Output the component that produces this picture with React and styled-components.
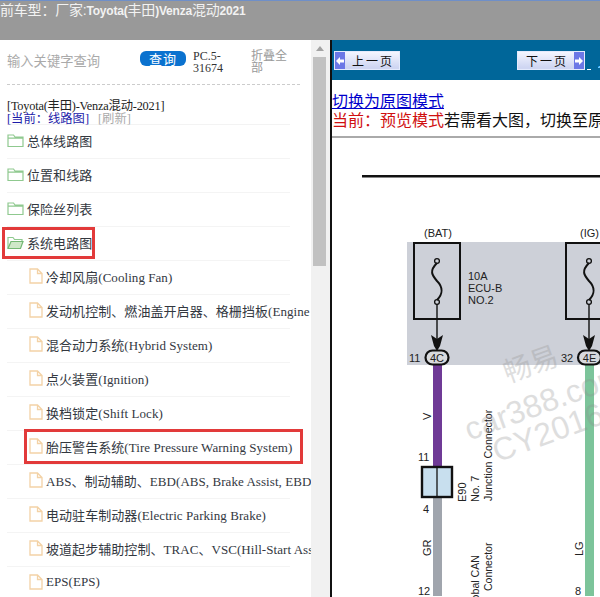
import React from 'react';
import styled, { createGlobalStyle } from 'styled-components';

const Global = createGlobalStyle`
  html, body { margin: 0; padding: 0; background: #fff; }
  body { width: 600px; height: 597px; overflow: hidden; font-family: "Liberation Serif", "Noto Sans CJK SC", serif; }
`;
const Page = styled.div`
  width: 600px; height: 597px; display: flex; flex-direction: column; overflow: hidden;
`;
const Header = styled.header`
  height: 39px; flex: none; background: #999; border-top: 1px solid #6f8fc8; letter-spacing: -.2px;
  color: #f2f2f2; font: bold 12px/18px "Liberation Sans", "Noto Sans CJK SC", sans-serif; white-space: nowrap; overflow: hidden;
`;
const Cjk = styled.span`font-size: 14px; font-weight: 400;`;
const Main = styled.main`flex: 1; min-height: 0; display: flex;`;
const Side = styled.aside`
  width: 311px; flex: none; overflow: hidden; box-sizing: border-box;
`;
const Search = styled.div`
  height: 44px; margin: 0 11px 0 7px; display: flex; align-items: center; border-bottom: 1px dashed #ccc; box-sizing: content-box;
`;
const Hint = styled.div`
  width: 133px; flex: none; font: 13.3px "Noto Sans CJK SC", sans-serif; color: #aaa; margin-top: -3px;
`;
const Query = styled.button`
  width: 46px; height: 15px; flex: none; border: 0; padding: 0; border-radius: 6px; background: #0b72cf; color: #fff;
  font: 13px/15px "Noto Sans CJK SC", sans-serif; letter-spacing: 1px; margin-top: -8px;
`;
const Version = styled.div`
  width: 58px; flex: none; margin-left: 7px; font-size: 12px; line-height: 12px; color: #333;
`;
const Fold = styled.div`
  width: 36px; flex: none; font: 12px/12px "Noto Sans CJK SC", sans-serif; color: #999; margin-top: -3px;
`;
const Crumbs = styled.div`
  margin: 15px 0 0 7px; font-size: 12.3px; line-height: 13px; width: 283px; height: 24px; border-bottom: 1px solid #f3f3f3; color: #222; white-space: nowrap;
`;
const CrumbTitle = styled.div`letter-spacing: -.2px;`;
const Current = styled.span`color: #1c1caa;`;
const Refresh = styled.span`color: #aaa; margin-left: 9px;`;
const Tree = styled.ul`list-style: none; margin: 0; padding: 0;`;
const Row = styled.li`
  position: relative; height: 34px; box-sizing: border-box; display: flex; align-items: center; gap: 3px;
  padding: 0 0 4px ${p => (p.$child ? 29 : 7)}px; width: 311px; white-space: nowrap;
  font-size: 13px; color: #333;
  &::before { content: ""; position: absolute; left: 7px; width: 283px; bottom: 0; border-bottom: 1px solid #f4f4f4; }
  & > svg { flex: none; }
`;
const Label = styled.span`flex: none; letter-spacing: .06px; color: #33383f;`;
const Mark = styled.div`
  position: absolute; box-sizing: border-box; border: 3px solid #e23a3a; pointer-events: none;
  left: ${p => p.$x}px; top: ${p => p.$y}px; width: ${p => p.$w}px; height: ${p => p.$h}px;
`;
const Bar = styled.div`
  width: 19px; flex: none; background: #f1f1f1; padding: 0 4px 0 2px; box-sizing: border-box; display: flex; flex-direction: column; align-items: stretch;
`;
const Arrow = styled.div`
  height: 17px; flex: none; display: flex; justify-content: center; align-items: center;
  &::before { content: ""; border: 4px solid transparent; border-top: 0; border-bottom: 5px solid #a3a3a3; }
`;
const Thumb = styled.div`height: 209px; background: #c1c1c1;`;
const Divider = styled.div`width: 2px; flex: none; background: #111;`;
const Content = styled.section`flex: 1; min-width: 0; display: flex; flex-direction: column; overflow: hidden;`;
const Toolbar = styled.div`
  height: 40px; flex: none; background: #006699; display: flex; align-items: center; padding: 0 0 0 2px; box-sizing: border-box; white-space: nowrap; overflow: hidden;
`;
const PageBtn = styled.div`
  height: 19px; width: ${p => p.$w}px; box-sizing: border-box; display: flex; align-items: center; flex-direction: ${p => (p.$next ? 'row-reverse' : 'row')};
  margin-left: ${p => p.$ml || 0}px; border: 1px solid #e4eafc; background: linear-gradient(#f4f6ff, #cfd6f2 90%);
  font: 12px "Noto Sans CJK SC", sans-serif; color: #111; margin-top: 1px; flex: none;
`;
const BtnArrow = styled.span`
  width: 10px; align-self: stretch; background: #6c78e6; display: flex; align-items: center; justify-content: center;
  color: #fff;
`;
const BtnText = styled.span`flex: 1; text-align: center; letter-spacing: 2px; padding-left: 2px;`;
const ToolGap = styled.span`
  width: 4px; height: 1px; flex: none; margin: 18px 0 0 2px; background: #fff;
`;
const ToolLink = styled.span`color: #6fc8ff; font-size: 13px; text-decoration: underline; margin-left: 7px;`;
const Notice = styled.div`
  height: 58px; flex: none; box-sizing: border-box; border-bottom: 2px solid #aaa; padding: 11px 0 0 0;
  font: 16px/19px "Noto Sans CJK SC", sans-serif; white-space: nowrap; color: #111;
`;
const SwitchLink = styled.a`color: #0000cc; text-decoration: underline; display: block; width: max-content;`;
const Red = styled.span`color: #d01010;`;
const Diagram = styled.svg`display: block; flex: 1; min-height: 0; width: 268px;`;

const Folder = ({ open }) => (
  <svg width="17" height="15" viewBox="0 0 17 15" fill="none" stroke="#8fc98f" strokeWidth="1.2">
    {open ? (
      <>
        <path d="M1 13V2.5h5l1.5 2H15V6" />
        <path d="M1 13.5h12.5L16 6.5H4z" fill="#cfe8c9" stroke="#74b874" />
      </>
    ) : (
      <path d="M1 13.5V2h5.5L8 4h8v9.5z M1 5.2h15" fill="#fff" />
    )}
  </svg>
);
const FileIcon = () => (
  <svg width="14" height="16" viewBox="0 0 14 16" fill="none" stroke="#f3d2a6" strokeWidth="1.3">
    <path d="M1 1h7.5L13 5.5V15H1z M8.5 1v4.5H13" fill="#fff" />
  </svg>
);

const folders = ['总体线路图', '位置和线路', '保险丝列表'];
const files = [
  '冷却风扇(Cooling Fan)',
  '发动机控制、燃油盖开启器、格栅挡板(Engine Control)',
  '混合动力系统(Hybrid System)',
  '点火装置(Ignition)',
  '换档锁定(Shift Lock)',
  '胎压警告系统(Tire Pressure Warning System)',
  'ABS、制动辅助、EBD(ABS, Brake Assist, EBD)',
  '电动驻车制动器(Electric Parking Brake)',
  '坡道起步辅助控制、TRAC、VSC(Hill-Start Assist)',
  'EPS(EPS)',
];

const Fuse = ({ x }) => (
  <g>
    <rect x={x - 23} y="244" width="46" height="76" fill="none" stroke="#111" strokeWidth="2" />
    <circle cx={x} cy="262" r="2.4" fill="none" stroke="#111" strokeWidth="1.3" />
    <circle cx={x} cy="303" r="2.4" fill="none" stroke="#111" strokeWidth="1.3" />
    <path d={`M${x} 264 C${x - 8} 272 ${x - 5} 276 ${x} 282 C${x + 6} 288 ${x + 6} 295 ${x} 301`} fill="none" stroke="#111" strokeWidth="2" />
    <path d={`M${x} 305V345`} stroke="#111" strokeWidth="1.4" />
    <path d={`M${x - 6} 336 L${x} 340 L${x + 6} 336 L${x + 3} 347 L${x} 352 L${x - 3} 347 Z`} fill="#111" />
  </g>
);
const Pill = ({ x, label }) => (
  <g>
    <rect x={x - 11.5} y="351.5" width="23" height="14" rx="7" fill="#d8dade" stroke="#111" strokeWidth="2.2" />
    <text x={x} y="363" textAnchor="middle" fontSize="11">{label}</text>
  </g>
);
const Vert = ({ x, y, children, size = 11 }) => (
  <text transform={`translate(${x} ${y}) rotate(-90)`} fontSize={size}>{children}</text>
);

export default function App() {
  return (
    <Page>
      <Global />
      <Header><Cjk>前车型：厂家:</Cjk>Toyota(<Cjk>丰田</Cjk>)Venza<Cjk>混动</Cjk>2021</Header>
      <Main>
        <Side>
          <Search>
            <Hint>输入关键字查询</Hint>
            <Query>查询</Query>
            <Version>PC.5-<br />31674</Version>
            <Fold>折叠全部</Fold>
          </Search>
          <Crumbs>
            <CrumbTitle>[Toyota(丰田)-Venza混动-2021]</CrumbTitle>
            <Current>[当前：线路图]</Current><Refresh>[刷新]</Refresh>
          </Crumbs>
          <Tree>
            {folders.map(f => (
              <Row key={f}><Folder /><Label>{f}</Label></Row>
            ))}
            <Row><Folder open /><Label>系统电路图</Label><Mark $x={2} $y={0} $w={93} $h={32} /></Row>
            {files.map((f, i) => (
              <Row key={f} $child>
                <FileIcon /><Label>{f}</Label>
                {i === 5 && <Mark $x={24} $y={-2} $w={279} $h={35} />}
              </Row>
            ))}
          </Tree>
        </Side>
        <Bar><Arrow /><Thumb /></Bar>
        <Divider />
        <Content>
          <Toolbar>
            <PageBtn $w={66}>
              <BtnArrow><svg width="8" height="8" viewBox="0 0 8 8"><path d="M0 4l4-4v2.5h4v3H4V8z" fill="#fff" /></svg></BtnArrow>
              <BtnText>上一页</BtnText>
            </PageBtn>
            <PageBtn $w={68} $ml={117} $next>
              <BtnArrow><svg width="8" height="8" viewBox="0 0 8 8"><path d="M8 4L4 0v2.5H0v3h4V8z" fill="#fff" /></svg></BtnArrow>
              <BtnText>下一页</BtnText>
            </PageBtn>
            <ToolGap />
            <ToolLink>上</ToolLink>
          </Toolbar>
          <Notice>
            <SwitchLink>切换为原图模式</SwitchLink>
            <Red>当前：预览模式</Red>若需看大图，切换至原图模式
          </Notice>
          <Diagram viewBox="332 140 268 457" fontFamily="'Liberation Sans', sans-serif" fill="#222">
            <rect x="362" y="176" width="238" height="2.5" fill="#111" />
            <rect x="407" y="243" width="193" height="123" fill="#cdd0d8" />
            <rect x="433" y="366" width="9" height="102" fill="#6f3a96" />
            <rect x="585" y="366" width="9" height="231" fill="#7cc49a" />
            <rect x="433" y="498" width="9" height="99" fill="#a0a5ad" />
            <Fuse x={437} />
            <Fuse x={589} />
            <Pill x={437} label="4C" />
            <Pill x={589.5} label="4E" />
            <g fontSize="11">
              <text x="424" y="238">(BAT)</text>
              <text x="580" y="238">(IG)</text>
              <text x="468" y="281">10A</text>
              <text x="468" y="293">ECU-B</text>
              <text x="468" y="305">NO.2</text>
              <text x="409" y="363">11</text>
              <text x="561" y="363">32</text>
              <text x="418" y="462">11</text>
              <text x="423" y="514">4</text>
              <text x="418" y="596">12</text>
              <text x="575" y="596">8</text>
            </g>
            <rect x="422" y="468" width="30" height="30" fill="#c8dfee" stroke="#111" strokeWidth="2.4" />
            <path d="M437 468V498" stroke="#111" strokeWidth="1.3" />
            <Vert x={431} y={421}>V</Vert>
            <Vert x={431} y={557}>GR</Vert>
            <Vert x={583} y={557}>LG</Vert>
            <Vert x={466} y={503}>E90</Vert>
            <Vert x={479} y={503}>No. 7</Vert>
            <Vert x={492} y={502} size={10.6}>Junction Connector</Vert>
            <Vert x={479} y={612} size={10.6}>Global CAN</Vert>
            <Vert x={492} y={592} size={10.5}>Connector</Vert>
            <g fill="#8d8d8d" opacity=".28" transform="rotate(-20 530 410)">
              <text x="518" y="378" fontSize="28" fontFamily="'Noto Sans CJK SC', sans-serif">畅易</text>
              <text x="462" y="419" fontSize="32">car388.com</text>
              <text x="481" y="449" fontSize="32">CY2016</text>
            </g>
          </Diagram>
        </Content>
      </Main>
    </Page>
  );
}
